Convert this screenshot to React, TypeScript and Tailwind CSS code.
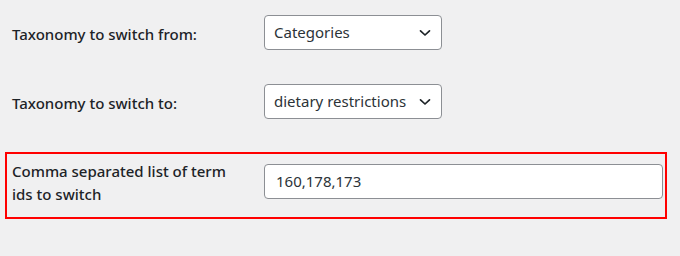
import React from "react";

const Chevron = () => (
  <svg width="12" height="8" viewBox="0 0 12 8" className="absolute right-[10px] top-1/2 -translate-y-1/2">
    <path d="M1.5 1.8 L6 6 L10.5 1.8" fill="none" stroke="#1d2327" strokeWidth="1.7" strokeLinecap="round" strokeLinejoin="round" />
  </svg>
);

const Select = ({ value }: { value: string }) => (
  <div className="relative w-[178px] h-[35px] bg-white border border-[#8c8f94] rounded-[4px] flex items-center pl-[9px] text-[15px] text-[#2c3338]">
    <span>{value}</span>
    <Chevron />
  </div>
);

export default function App() {
  return (
    <div
      className="w-[680px] h-[256px] bg-[#f0f0f1] text-[#1d2327] overflow-hidden"
      style={{ fontFamily: '"Noto Sans", "Open Sans", sans-serif' }}
    >
      <div className="pt-[15px] pl-[12px] flex items-center">
        <div className="w-[252px] pt-[4px] text-[15px] font-medium">Taxonomy to switch from:</div>
        <Select value="Categories" />
      </div>
      <div className="pt-[34px] pl-[12px] flex items-center">
        <div className="w-[252px] pt-[4px] text-[15px] font-medium">Taxonomy to switch to:</div>
        <Select value="dietary restrictions" />
      </div>
      <div className="mt-[33px] ml-[5px] w-[662px] h-[67px] border-2 border-[#f00] flex items-start pt-[6px] pl-[5px] pr-[2px]">
        <div className="w-[252px] pr-[24px] text-[15px] font-medium leading-[23px]">
          Comma separated list of term ids to switch
        </div>
        <div className="mt-[4px] flex-1 h-[35px] bg-white border border-[#8c8f94] rounded-[4px] flex items-center pl-[11px] text-[15px] text-[#2c3338]">
          160,178,173
        </div>
      </div>
    </div>
  );
}
